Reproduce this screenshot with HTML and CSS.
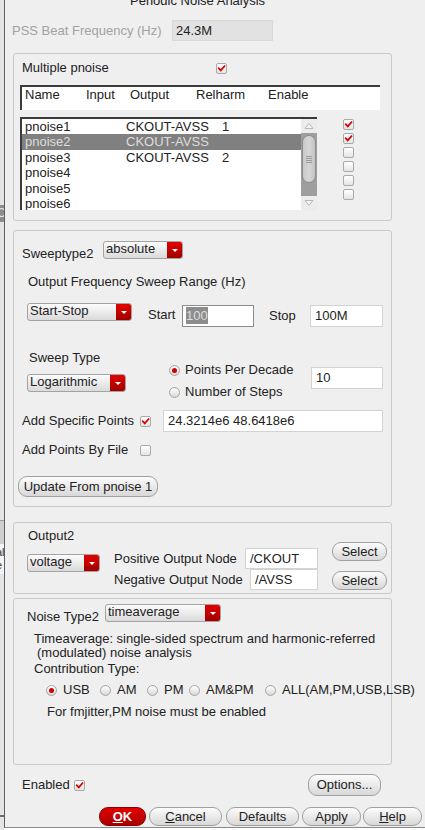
FILE: index.html
```html
<!DOCTYPE html>
<html>
<head>
<meta charset="utf-8">
<title>Periodic Noise Analysis</title>
<link rel="stylesheet" href="styles.css">
</head>
<body>
<div class="screen">
  <div class="behind">
    <div class="bh-top"></div>
    <div class="bh-dark">C</div>
    <div class="bh-mid"></div>
    <div class="bh-box"></div>
    <div class="bh-text"><div>al</div><div>e</div></div>
    <div class="bh-low"></div>
    <div class="bh-line"></div>
  </div>

  <div class="dialog">
    <div class="title">Periodic Noise Analysis</div>

    <div class="pss">
      <span class="lbl-pss">PSS Beat Frequency (Hz)</span>
      <div class="field disabled w-pss">24.3M</div>
    </div>

    <!-- Group 1 -->
    <div class="group g1">
      <div class="mp">
        <span class="lbl-mp">Multiple pnoise</span>
        <span class="cb checked"><svg viewBox="0 0 11 11"><path d="M2.2 5.2 L4.6 7.8 L9.2 2.6"/></svg></span>
      </div>
      <div class="hdr">
        <span class="c-name">Name</span><span class="c-in">Input</span><span class="c-out">Output</span><span class="c-rel">Relharm</span><span>Enable</span>
      </div>
      <div class="listrow">
        <div class="list">
          <div class="items">
            <div class="item"><span class="i-name">pnoise1</span><span class="i-out">CKOUT-AVSS</span><span>1</span></div>
            <div class="item sel"><span class="i-name">pnoise2</span><span class="i-out">CKOUT-AVSS</span><span></span></div>
            <div class="item"><span class="i-name">pnoise3</span><span class="i-out">CKOUT-AVSS</span><span>2</span></div>
            <div class="item"><span class="i-name">pnoise4</span></div>
            <div class="item"><span class="i-name">pnoise5</span></div>
            <div class="item"><span class="i-name">pnoise6</span></div>
          </div>
          <div class="sb">
            <div class="sb-btn"><svg viewBox="0 0 16 14"><path d="M4 9.5 L8 4.5 L12 9.5 Z"/></svg></div>
            <div class="sb-track">
              <div class="sb-thumb"><span class="grip"></span><span class="grip"></span><span class="grip"></span><span class="grip"></span></div>
            </div>
            <div class="sb-btn"><svg viewBox="0 0 16 14"><path d="M4 4.5 L8 9.5 L12 4.5 Z"/></svg></div>
          </div>
        </div>
        <div class="checks">
          <span class="cb checked"><svg viewBox="0 0 11 11"><path d="M2.2 5.2 L4.6 7.8 L9.2 2.6"/></svg></span>
          <span class="cb checked"><svg viewBox="0 0 11 11"><path d="M2.2 5.2 L4.6 7.8 L9.2 2.6"/></svg></span>
          <span class="cb"></span>
          <span class="cb"></span>
          <span class="cb"></span>
          <span class="cb"></span>
        </div>
      </div>
    </div>

    <!-- Group 2 -->
    <div class="group g2">
      <div class="r-sweep">
        <span class="lbl-sweep">Sweeptype2</span>
        <div class="combo w-abs"><span class="combo-text">absolute</span><span class="combo-btn"><i></i></span></div>
      </div>
      <div class="h-range">Output Frequency Sweep Range (Hz)</div>
      <div class="r-ss">
        <div class="combo w-ss"><span class="combo-text">Start-Stop</span><span class="combo-btn"><i></i></span></div>
        <span class="lbl-start">Start</span>
        <div class="field focus w-start"><span class="hl">100</span></div>
        <span class="lbl-stop">Stop</span>
        <div class="field w-stop">100M</div>
      </div>
      <div class="r-st">
        <div class="col-a">
          <div class="lbl-st">Sweep Type</div>
          <div class="combo w-log"><span class="combo-text">Logarithmic</span><span class="combo-btn"><i></i></span></div>
        </div>
        <div class="col-b">
          <div class="rad-row"><span class="radio on"></span><span>Points Per Decade</span></div>
          <div class="rad-row second"><span class="radio"></span><span>Number of Steps</span></div>
        </div>
        <div class="field w-ten">10</div>
      </div>
      <div class="r-asp">
        <span class="lbl-add">Add Specific Points</span>
        <span class="cb checked"><svg viewBox="0 0 11 11"><path d="M2.2 5.2 L4.6 7.8 L9.2 2.6"/></svg></span>
        <div class="field w-pts">24.3214e6 48.6418e6</div>
      </div>
      <div class="r-apf">
        <span class="lbl-add">Add Points By File</span>
        <span class="cb"></span>
      </div>
      <div class="btn w-upd">Update From pnoise 1</div>
    </div>

    <!-- Group 3 -->
    <div class="group g3">
      <div class="col-o">
        <div class="lbl-o2">Output2</div>
        <div class="combo w-volt"><span class="combo-text">voltage</span><span class="combo-btn"><i></i></span></div>
      </div>
      <div class="col-n">
        <div class="node-row"><span class="node-lbl">Positive Output Node</span><div class="field w-pos">/CKOUT</div></div>
        <div class="node-row"><span class="node-lbl">Negative Output Node</span><div class="field w-neg">/AVSS</div></div>
      </div>
      <div class="col-s">
        <div class="btn w-sel">Select</div>
        <div class="btn w-sel">Select</div>
      </div>
    </div>

    <!-- Group 4 -->
    <div class="group g4">
      <div class="r-nt">
        <span class="lbl-nt">Noise Type2</span>
        <div class="combo w-nt"><span class="combo-text">timeaverage</span><span class="combo-btn"><i></i></span></div>
      </div>
      <div class="desc">
        <div>Timeaverage: single-sided spectrum and harmonic-referred</div>
        <div class="indent">(modulated) noise analysis</div>
        <div class="ctype">Contribution Type:</div>
      </div>
      <div class="radios">
        <div class="ritem r-usb"><span class="radio on"></span><span>USB</span></div>
        <div class="ritem r-am"><span class="radio"></span><span>AM</span></div>
        <div class="ritem r-pm"><span class="radio"></span><span>PM</span></div>
        <div class="ritem r-ampm"><span class="radio"></span><span>AM&amp;PM</span></div>
        <div class="ritem"><span class="radio"></span><span>ALL(AM,PM,USB,LSB)</span></div>
      </div>
      <div class="fm">For fmjitter,PM noise must be enabled</div>
    </div>

    <div class="foot">
      <div class="en">
        <span class="lbl-en">Enabled</span>
        <span class="cb checked"><svg viewBox="0 0 11 11"><path d="M2.2 5.2 L4.6 7.8 L9.2 2.6"/></svg></span>
      </div>
      <div class="btn w-opt">Options...</div>
    </div>

    <div class="btns">
      <div class="btn ok"><u>O</u>K</div>
      <div class="btn w-cancel"><u>C</u>ancel</div>
      <div class="btn w-def">Defaults</div>
      <div class="btn w-apply">Apply</div>
      <div class="btn w-help"><u>H</u>elp</div>
    </div>
  </div>
</div>
</body>
</html>
```

FILE: styles.css
```css
* { box-sizing: border-box; }
html, body { margin: 0; padding: 0; }
body {
  width: 425px;
  height: 830px;
  overflow: hidden;
  background: #ffffff;
  font-family: "Liberation Sans", Arial, sans-serif;
  font-size: 13px;
  line-height: 14px;
  color: #222222;
}
.screen { display: flex; align-items: flex-start; height: 830px; }

/* window behind the dialog */
.behind {
  flex: none;
  width: 4px;
  height: 830px;
  display: flex;
  flex-direction: column;
  overflow: hidden;
  background: #e4e4e4;
}
.bh-top { height: 205px; }
.bh-dark { height: 17px; background: #8c8c8c; color: #e6e6e6; font-size: 12px; line-height: 17px; text-indent: -3px; overflow: hidden; }
.bh-mid { height: 298px; }
.bh-box { height: 24px; background: #cfcfcf; border-top: 1px solid #9a9a9a; }
.bh-text { height: 30px; color: #333; font-size: 11px; line-height: 13px; text-indent: -4px; padding-top: 2px; background: #f4f4f4; overflow: hidden; }
.bh-low { height: 241px; }
.bh-line { height: 2px; background: #6a6a6a; }

.dialog {
  flex: none;
  width: 440px;
  height: 828px;
  background: #efefef;
  border-left: 1px solid #5e5e5e;
  border-bottom: 1px solid #8a8a8a;
  padding-left: 8px;
  display: flex;
  flex-direction: column;
  align-items: flex-start;
}
.title {
  margin-top: -7px;
  height: 16px;
  line-height: 16px;
  padding-left: 117px;
  white-space: nowrap;
}

/* generic controls */
.field {
  background: #ffffff;
  border: 1px solid #d3d3d3;
  padding-left: 4px;
  line-height: 20px;
  white-space: nowrap;
  overflow: hidden;
  flex: none;
}
.field.disabled { background: #e2e2e2; border-color: #dadada; padding-left: 3px; line-height: 19px; }
.field.focus { border-color: #8c8c8c; padding-left: 3px; }
.hl { background: #8d8d8d; color: #dedede; display: inline-block; line-height: 17px; margin-top: 1px; }

.cb {
  flex: none;
  display: inline-block;
  width: 11px;
  height: 11px;
  border: 1px solid #a9a9a9;
  border-radius: 2px;
  background: linear-gradient(#ffffff, #e4e4e4);
}
.cb svg { display: block; width: 9px; height: 9px; }
.cb path { fill: none; stroke: #d50000; stroke-width: 2.1; stroke-linecap: square; }

.radio {
  flex: none;
  display: inline-block;
  width: 11px;
  height: 11px;
  border: 1px solid #a5a5a5;
  border-radius: 50%;
  background: linear-gradient(#ffffff, #d9d9d9);
  position: relative;
}
.radio.on::after {
  content: "";
  position: absolute;
  left: 2px;
  top: 2px;
  width: 5px;
  height: 5px;
  border-radius: 50%;
  background: #d00000;
}

.combo {
  flex: none;
  display: flex;
  height: 18px;
  border: 1px solid #a3a3a3;
  border-radius: 3px;
  background: linear-gradient(#fcfcfc, #dadada);
  overflow: hidden;
}
.combo-text { flex: 1; padding-left: 2px; line-height: 14px; white-space: nowrap; }
.combo-btn {
  flex: none;
  width: 15px;
  height: 16px;
  background: linear-gradient(#e40000, #9e0000);
  display: flex;
  align-items: center;
  justify-content: center;
}
.combo-btn i {
  display: block;
  width: 0;
  height: 0;
  border-left: 3px solid transparent;
  border-right: 3px solid transparent;
  border-top: 3px solid #ffffff;
}

.btn {
  flex: none;
  height: 19px;
  border: 1px solid #a0a0a0;
  border-radius: 9px;
  background: linear-gradient(#fcfcfc, #d8d8d8);
  text-align: center;
  line-height: 17px;
  white-space: nowrap;
}
.btn u { text-decoration: underline; text-underline-offset: 1px; }

.group {
  flex: none;
  width: 379px;
  border: 1px solid #c9c9c9;
  border-radius: 3px;
  display: flex;
  flex-direction: column;
  align-items: flex-start;
}

/* PSS row */
.pss { display: flex; align-items: center; margin-top: 11px; margin-left: -1px; height: 21px; }
.lbl-pss { width: 160px; color: #a2a2a2; white-space: nowrap; }
.w-pss { width: 101px; height: 21px; }

/* group 1 */
.g1 { margin-top: 12px; height: 168px; }
.mp { display: flex; align-items: center; margin-top: 6px; padding-left: 8px; height: 16px; }
.lbl-mp { width: 194px; }
.hdr {
  margin-top: 9px;
  margin-left: 6px;
  width: 360px;
  height: 25px;
  background: #ffffff;
  border-top: 2px solid #3b3b3b;
  border-left: 2px solid #3b3b3b;
  padding: 1px 0 0 3px;
  display: flex;
  white-space: nowrap;
}
.c-name { width: 61px; }
.c-in { width: 44px; }
.c-out { width: 66px; }
.c-rel { width: 72px; }
.listrow { display: flex; margin-top: 7px; margin-left: 6px; }
.list {
  width: 297px;
  height: 93px;
  background: #ffffff;
  border-top: 2px solid #3b3b3b;
  border-left: 2px solid #3b3b3b;
  display: flex;
  overflow: hidden;
}
.items { width: 279px; display: flex; flex-direction: column; }
.item { flex: none; display: flex; height: 15.4px; line-height: 15.4px; padding-left: 3px; white-space: nowrap; }
.item.sel { background: #808080; color: #dddddd; }
.i-name { width: 101px; }
.i-out { width: 96px; }
.sb { width: 16px; display: flex; flex-direction: column; background: #ececec; }
.sb-btn { height: 14px; flex: none; }
.sb-btn svg { display: block; width: 16px; height: 14px; }
.sb-btn path { fill: #f6f6f6; stroke: #b8b8b8; stroke-width: 1; }
.sb-track { flex: 1; background: #9e9e9e; padding: 2px 1px 0 1px; }
.sb-thumb {
  height: 48px;
  border: 1px solid #8c8c8c;
  border-radius: 7px;
  background: linear-gradient(90deg, #c9c9c9, #d6d6d6 50%, #c2c2c2);
  display: flex;
  flex-direction: column;
  align-items: center;
  justify-content: center;
  gap: 1px;
}
.grip { display: block; width: 6px; height: 1px; background: #9a9a9a; }
.checks { display: flex; flex-direction: column; gap: 3px; margin-left: 26px; padding-top: 2px; }

/* group 2 */
.g2 { margin-top: 9px; height: 277px; }
.r-sweep { display: flex; margin-top: 10px; padding-left: 8px; height: 20px; }
.lbl-sweep { width: 81px; padding-top: 6px; }
.w-abs { width: 80px; }
.h-range { margin-top: 14px; margin-left: 14px; white-space: nowrap; }
.r-ss { display: flex; align-items: flex-start; margin-top: 14px; margin-left: 13px; height: 24px; }
.w-ss { width: 105px; }
.lbl-start { margin-left: 16px; width: 34px; padding-top: 5px; }
.w-start { width: 72px; height: 22px; margin-top: 2px; }
.lbl-stop { margin-left: 15px; width: 41px; padding-top: 6px; }
.w-stop { width: 73px; height: 22px; margin-top: 2px; }
.r-st { display: flex; align-items: flex-start; margin-top: 24px; margin-left: 13px; }
.col-a { width: 142px; }
.lbl-st { padding-left: 2px; }
.w-log { width: 99px; margin-top: 9px; }
.col-b { width: 142px; padding-top: 12px; }
.rad-row { display: flex; align-items: center; gap: 5px; height: 14px; white-space: nowrap; }
.rad-row.second { margin-top: 8px; }
.w-ten { width: 72px; height: 22px; margin-top: 16px; }
.r-asp { display: flex; align-items: center; margin-top: 11px; padding-left: 8px; height: 22px; }
.lbl-add { width: 118px; white-space: nowrap; }
.w-pts { width: 220px; height: 22px; margin-left: 12px; }
.r-apf { display: flex; align-items: center; margin-top: 11px; padding-left: 8px; height: 14px; }
.w-upd { width: 140px; height: 21px; line-height: 19px; margin-top: 19px; margin-left: 4px; }

/* group 3 */
.g3 { margin-top: 15px; height: 72px; flex-direction: row; }
.col-o { margin-left: 13px; margin-top: 6px; }
.lbl-o2 { padding-left: 1px; }
.w-volt { width: 73px; margin-top: 11px; }
.col-n { margin-left: 14px; margin-top: 25px; width: 204px; }
.node-row { display: flex; align-items: center; height: 21px; }
.node-lbl { flex: 1; white-space: nowrap; }
.w-pos { width: 73px; height: 21px; }
.w-neg { width: 68px; height: 21px; }
.col-s { margin-left: 14px; margin-top: 19px; display: flex; flex-direction: column; gap: 10px; }
.w-sel { width: 55px; }

/* group 4 */
.g4 { margin-top: 4px; height: 167px; }
.r-nt { display: flex; margin-top: 5px; padding-left: 13px; height: 20px; }
.lbl-nt { width: 78px; padding-top: 6px; }
.w-nt { width: 116px; }
.desc { margin-top: 8px; margin-left: 20px; white-space: nowrap; }
.indent { padding-left: 3px; }
.ctype { margin-top: 2px; }
.radios { display: flex; margin-top: 7px; margin-left: 32px; white-space: nowrap; height: 14px; }
.ritem { display: flex; align-items: center; gap: 6px; flex: none; }
.r-usb { width: 54px; }
.r-am { width: 47px; }
.r-pm { width: 42px; }
.r-ampm { width: 76px; }
.fm { margin-top: 8px; margin-left: 33px; white-space: nowrap; }

/* footer */
.foot { display: flex; justify-content: space-between; align-items: center; margin-top: 9px; width: 368px; height: 22px; }
.en { display: flex; align-items: center; padding-left: 9px; }
.lbl-en { width: 52px; }
.w-opt { width: 73px; height: 22px; line-height: 20px; }
.btns { display: flex; margin-top: 11px; margin-left: 86px; }
.ok {
  width: 47px;
  background: linear-gradient(#e30000, #a80000);
  border-color: #8a0000;
  color: #ffffff;
  font-weight: bold;
}
.w-cancel { width: 73px; margin-left: 3px; }
.w-def { width: 73px; margin-left: 4px; }
.w-apply { width: 59px; margin-left: 3px; }
.w-help { width: 59px; margin-left: 2px; }
```
